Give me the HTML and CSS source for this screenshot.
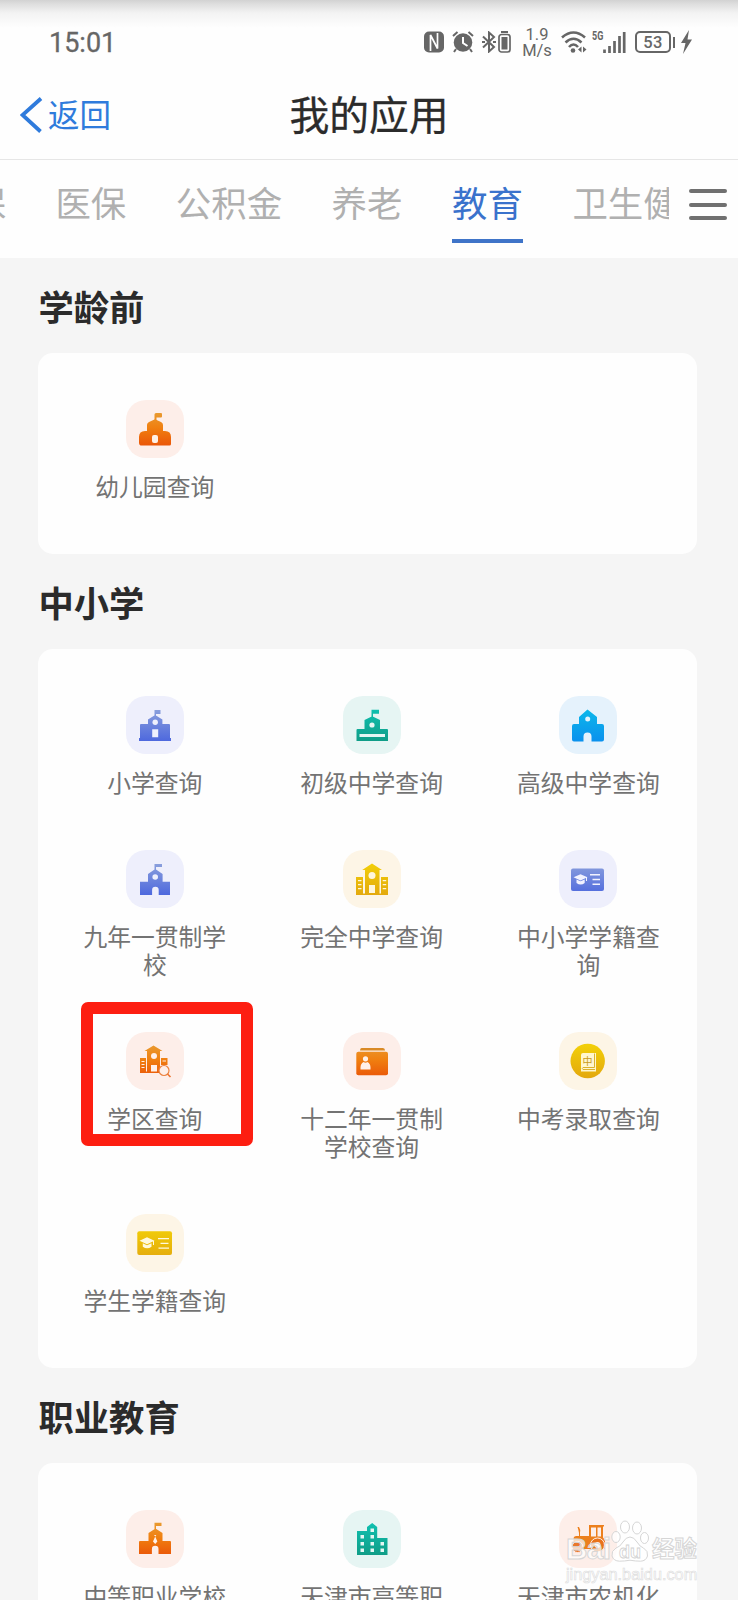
FILE: index.html
```html
<!DOCTYPE html>
<html lang="zh-CN">
<head>
<meta charset="utf-8">
<title>我的应用</title>
<link rel="stylesheet" href="styles.css">
</head>
<body>
<svg class="defs" width="0" height="0" aria-hidden="true">
  <defs>
    <linearGradient id="orange" gradientUnits="userSpaceOnUse" x1="0" y1="13" x2="0" y2="46"><stop offset="0" stop-color="#e99a30"/><stop offset=".45" stop-color="#f07f10"/><stop offset="1" stop-color="#ea5508"/></linearGradient>
    <linearGradient id="indigo" gradientUnits="userSpaceOnUse" x1="0" y1="13" x2="0" y2="46"><stop offset="0" stop-color="#8ba0dc"/><stop offset="1" stop-color="#4c67de"/></linearGradient>
    <linearGradient id="green" gradientUnits="userSpaceOnUse" x1="0" y1="13" x2="0" y2="46"><stop offset="0" stop-color="#10c0b0"/><stop offset="1" stop-color="#109c86"/></linearGradient>
    <linearGradient id="blue" gradientUnits="userSpaceOnUse" x1="0" y1="13" x2="0" y2="46"><stop offset="0" stop-color="#0cb8ea"/><stop offset="1" stop-color="#0a90ee"/></linearGradient>
    <linearGradient id="gold" gradientUnits="userSpaceOnUse" x1="0" y1="13" x2="0" y2="46"><stop offset="0" stop-color="#f2cf08"/><stop offset="1" stop-color="#e3a80e"/></linearGradient>
  </defs>
</svg>
<div class="screen">
  <header class="top">
    <div class="status">
      <span class="clock">15:01</span>
      <div class="indicators">
        <svg class="nfc" width="20" height="22" viewBox="0 0 20 22"><rect y=".5" width="20" height="21" rx="5" fill="#666"/><path d="M6.500 20V4l7 13.500V2" fill="none" stroke="#fff" stroke-width="1.700"/></svg>
        <svg class="alarm" width="22" height="22" viewBox="0 0 22 22"><circle cx="11" cy="11.500" r="9.300" fill="#666"/><path d="M1 5 5.500 1M21 5 16.500 1M4 18l-2 3M18 18l2 3" stroke="#666" stroke-width="2"/><path d="M11 6v6l4.500 3" fill="none" stroke="#fff" stroke-width="2"/></svg>
        <svg class="bluetooth" width="14" height="22" viewBox="0 0 14 22"><path d="M1 5.500 12 16l-5 4.500v-19L12 6 1 16.500" fill="none" stroke="#666" stroke-width="2"/><path d="M0 11h3M11 11h3" stroke="#666" stroke-width="2"/></svg>
        <svg class="cell" width="13" height="22" viewBox="0 0 13 22"><path d="M3 1h7" stroke="#666" stroke-width="2"/><rect x="1" y="3.500" width="11" height="17.500" rx="2.500" fill="none" stroke="#666" stroke-width="1.700"/><rect x="3.500" y="6" width="6" height="12.500" fill="#666"/></svg>
        <span class="speed"><span>1.9</span><span>M/s</span></span>
        <svg class="wifi" width="26" height="22" viewBox="0 0 26 22"><g fill="none" stroke="#666" stroke-width="2.600"><path d="M1 6.500Q12.500-3.500 24 6.500"/><path d="M4.500 11.500Q12.500 4 20.500 11.500"/><path d="M8 16Q12.500 11 17 16"/></g><circle cx="12" cy="19.500" r="2.300" fill="#666"/><path d="M20.500 15.500v6l-3.500-3zM22 15.500v6l3.500-3z" fill="#666"/></svg>
        <span class="net">5G</span>
        <svg class="signal" width="23" height="22" viewBox="0 0 23 22"><path d="M1.500 18.500V22M6.500 15v7M11.500 10v12M16.500 5v17M21.200 1v21" stroke="#666" stroke-width="2.700"/></svg>
        <span class="battery">53</span>
        <i class="nub"></i>
        <svg class="bolt" width="11" height="24" viewBox="0 0 11 24"><path d="M8 0 0 13h4.500L2 24 11 9.500H6.500z" fill="#666"/></svg>
      </div>
    </div>
    <div class="nav">
      <a class="back"><svg width="23" height="36" viewBox="0 0 23 36"><path d="M21 1.500 2.500 18 20.500 34.500" fill="none" stroke="#2f7bdc" stroke-width="3.800"/></svg><span>返回</span></a>
      <h1>我的应用</h1>
    </div>
  </header>
  <nav class="tabbar">
    <div class="tabs">
      <span>社保</span><span>医保</span><span>公积金</span><span>养老</span><span class="active">教育</span><span>卫生健康</span>
    </div>
    <div class="burger"><i></i><i></i><i></i></div>
  </nav>
  <main>
    <h2>学龄前</h2>
    <section class="card">
      <div class="app"><svg class="icon peach" viewBox="0 0 58 58"><g fill="url(#orange)"><path d="M28.500 21V14.500q0-1.500 1.500-1.500h5q1 0 1 1v2.500q0 1-1 1h-4.500V21z"/><path d="M21 31v-6q0-2 2-3l6-2.700 6 2.700q2 1 2 3v6h2q6 0 6 6v7q0 1.500-1.500 1.500h-29Q13 44.500 13 43v-6q0-6 6-6z"/></g><rect x="26" y="35" width="6" height="8" rx="2" fill="#fff0e5"/></svg><p>幼儿园查询</p></div>
    </section>
    <h2>中小学</h2>
    <section class="card">
      <div class="app"><svg class="icon lilac" viewBox="0 0 58 58"><g fill="url(#indigo)"><path d="M28.500 21v-7h6v4h-4.500v3zM22 28v-4.500l7.200-4.500 7.200 4.500V28h6.600q1 0 1 1v13h1v3H13v-3h1V29q0-1 1-1z"/></g><g fill="#eef0fd"><circle cx="29.200" cy="26.300" r="2.700"/><path d="M26.200 33.300h6v8h-6z"/></g></svg><p>小学查询</p></div>
      <div class="app"><svg class="icon mint" viewBox="0 0 58 58"><path fill="url(#green)" d="M28.500 22v-8.300h7.500v4h-6V22zM21.500 33v-9l7.700-3.700L37 24v9h7q1 0 1 1v11H13.500V34q0-1 1-1z"/><g fill="#e5f6f3"><circle cx="29" cy="29" r="2.600"/><path d="M16.500 38h25.500v3H16.500z"/></g></svg><p>初级中学查询</p></div>
      <div class="app"><svg class="icon sky" viewBox="0 0 58 58"><path fill="url(#blue)" d="M28.500 13.500 38 21v7h5q2 0 2 2v13.500q0 2-2 2H32.500v-5a4 4 0 0 0-8 0v5H15q-2 0-2-2V30q0-2 2-2h5v-7z"/><circle cx="28.700" cy="23" r="2.500" fill="#e3f3fd"/></svg><p>高级中学查询</p></div>

      <div class="app"><svg class="icon lilac" viewBox="0 0 58 58"><path fill="url(#indigo)" d="M28.500 20v-6h7.500v3h-6v3zM22 31.700V24l7.300-5 7.300 5v7.700H44V45H32.700v-5a3.300 3.300 0 0 0-6.600 0v5H14V31.700z"/><circle cx="29.200" cy="27" r="2.800" fill="#eef0fd"/></svg><p>九年一贯制学校</p></div>
      <div class="app"><svg class="icon cream" viewBox="0 0 58 58"><path fill="url(#gold)" d="m29 13.500 10 6.500h-2.500v23.500H38V27h7v18H13V27h7v16.500h2V20h-2.800z"/><g fill="#fff6dc"><circle cx="29" cy="25.500" r="3.500"/><path d="M26 35h6v8h-6zM15 30h3.500v1.200H15zM15 34h3.500v1.200H15zM15 38h3.500v1.200H15zM39.700 30h3.500v1.200h-3.500zM39.700 34h3.500v1.200h-3.500zM39.700 38h3.500v1.200h-3.500z"/></g></svg><p>完全中学查询</p></div>
      <div class="app"><svg class="icon lilac" viewBox="0 0 58 58"><rect x="12" y="18.500" width="33" height="22.500" rx="2" fill="url(#indigo)"/><g fill="#f1f2ff"><path d="m21.500 24.300 7 3-7 3.200-7-3.200zM17.500 29.500l4 1.800 4.200-1.800v3.500q-4 3-8.200 0z"/><path d="M27 27h1v4h-1zM31 24h10v1.500H31zM33.500 28.800h7.500v1.500h-7.500zM33.500 33.500h7.500V35h-7.500z"/></g></svg><p>中小学学籍查询</p></div>

      <div class="app marked"><svg class="icon peach" viewBox="0 0 58 58"><path fill="url(#orange)" d="m27.500 13.500 9 5.500H34v22H14V26h6v13.500h1V19h-2.500zM35 26h6.500v7H35z"/><g fill="#fff0e8"><circle cx="28" cy="24" r="3"/><path d="M25 33h6v6.500h-6zM15.500 29h3v1h-3zM15.500 32h3v1h-3zM15.500 35h3v1h-3zM36.500 28.500h3.500v1h-3.500z"/></g><circle cx="38" cy="38.500" r="5" fill="#feefe9" stroke="#ec8340" stroke-width="1.200"/><path d="m41.500 42 3 3" stroke="#ec7430" stroke-width="1.600"/></svg><p>学区查询</p></div>
      <div class="app"><svg class="icon peach" viewBox="0 0 58 58"><path fill="#d98a26" d="M18.500 16H40q2 0 2 2.500H17q0-2.500 1.500-2.500z"/><rect x="13.300" y="19.700" width="31.700" height="23.500" rx="2" fill="url(#orange)"/><g fill="#fff0e8"><circle cx="22.500" cy="26.800" r="2.600"/><path d="M17.500 37.500v-2q0-4 3-5.500 2 1.300 4 0 3 1.500 3 5.500v2z"/></g></svg><p>十二年一贯制学校查询</p></div>
      <div class="app"><svg class="icon cream" viewBox="0 0 58 58"><circle cx="28.700" cy="29" r="17.200" fill="url(#gold)"/><path fill="#fff6cf" d="M24 21h13v18.500H22V23q0-2 2-2z"/><path d="M35.500 21.500V35.500H24q-1.500 1 0 2h12" fill="none" stroke="#dbb22c"/><text class="book" x="28.500" y="32.500" text-anchor="middle">中</text></svg><p>中考录取查询</p></div>

      <div class="app"><svg class="icon cream" viewBox="0 0 58 58"><rect x="11.300" y="17.300" width="34.700" height="23.700" rx="2" fill="url(#gold)"/><g fill="#fff9dd"><path d="m21 23.300 7.500 3.500-7.500 3.500-7.500-3.500zM16.800 29.300l4.200 2 4.500-2v3.500q-4.300 3-8.700 0z"/><path d="M27 27h1v4h-1zM32 24h11v1.300H32zM34.500 28.800h8v1.300h-8zM32.500 33.500h10.500v1.300H32.500z"/></g></svg><p>学生学籍查询</p></div>
    </section>
    <h2>职业教育</h2>
    <section class="card">
      <div class="app"><svg class="icon peach" viewBox="0 0 58 58"><path fill="url(#orange)" d="M28.500 19v-6.300H35.500V16H30v3zM22.500 31v-8l7-4.500 7 4.500v8h7.500q1 0 1 1v12H32.500v-5a3.300 3.300 0 0 0-6.600 0v5H13V32q0-1 1-1z"/><path d="m28 25 1.200 1.500L27 31.500l2.200 2.500 2.200-2.500-2.200-5 1.200-1.500z" fill="#fff0e8"/></svg><p>中等职业学校查询</p></div>
      <div class="app"><svg class="icon mint" viewBox="0 0 58 58"><path fill="url(#green)" d="M14 45V21h10v-4l5.200-4 5 4v11H44.500v17z"/><path fill="#e5f6f3" d="M27.500 18.500h3.500V22h-3.500zM17.500 25H21v3.500h-3.500zM27.500 25h3.500v3.500h-3.500zM17.500 32H21v3.500h-3.500zM27.500 32h3.500v3.500h-3.500zM37.500 32H41v3.500h-3.500zM17.500 38.500H21V42h-3.500zM27.500 38.500h3.500V42h-3.500zM37.500 38.500H41V42h-3.500z"/></svg><p>天津市高等职业院校</p></div>
      <div class="app"><svg class="icon peach" viewBox="0 0 58 58"><path fill="#ec7f1c" fill-rule="evenodd" d="M18.500 17h1.500q2 3 1 6v3H30V15h15v1.500h-1v11l2 2.500v9H14.500v-10q0-3 3-3H20v-3q-.5-3-1.500-6zM32 17.500v9h5v-9zM38.500 17.500v9H42v-9z"/><circle cx="18.500" cy="37" r="5.500" fill="#e9772a" stroke="#feefe9"/><circle cx="38.500" cy="35" r="7" fill="#e9731c" stroke="#feefe9"/><circle cx="38.500" cy="35" r="3" fill="#feefe9"/></svg><p>天津市农机化学校</p></div>
    </section>
  </main>
  <div class="watermark">
    <div class="brand"><span class="bai">Bai</span><svg width="38" height="42" viewBox="0 0 38 42"><g class="paw"><ellipse cx="5" cy="17" rx="4.200" ry="5.500"/><ellipse cx="14" cy="7" rx="4.500" ry="6"/><ellipse cx="26" cy="8" rx="4.500" ry="6"/><ellipse cx="33.500" cy="18" rx="4" ry="5.500"/><path d="M19 17q4 0 7 5t6.500 6q5 3 4 8-1.500 5-7 5.200-5 0-10.500-1-5.500 1-10.500 1-6-.2-7.500-5.200-1-5 4-8 4-1 7-6t7-5z"/></g><text class="du" x="19" y="37.500" text-anchor="middle">du</text></svg><span class="zh">经验</span></div>
    <div class="site">jingyan.baidu.com</div>
  </div>
</div>
</body>
</html>
```

FILE: styles.css
```css
*, *::after { box-sizing: border-box; }
body {
  margin: 0;
  background: #f5f5f5;
  font-family: "Noto Sans CJK SC", sans-serif;
}
.defs { position: absolute; }
.screen {
  position: relative;
  width: 738px;
  height: 1600px;
  overflow: hidden;
}

/* Status bar and title */
.top {
  height: 160px;
  background: linear-gradient(#d2d2d2 0, #dedede 4px, #f3f3f3 13px, #fefefe 28px, #fefefe);
  border-bottom: 1px solid #e6e6e6;
}
.status {
  display: flex;
  justify-content: space-between;
  height: 72px;
  padding: 31px 46px 0 49px;
  font-family: Roboto, sans-serif;
  color: #666;
}
.clock { font-size: 27px; line-height: 24px; -webkit-text-stroke: .3px #666; }
.indicators { display: flex; align-items: flex-start; }
.indicators svg { display: block; }
.alarm { margin-left: 8px; }
.bluetooth { margin-left: 8px; }
.cell { margin-left: 2px; }
.speed {
  display: flex;
  flex-direction: column;
  align-items: center;
  width: 28px;
  margin: -4px -1px 0 12px;
  font-size: 16.500px;
  line-height: 15.500px;
}
.wifi { margin-left: 11px; }
.net {
  width: 11px;
  margin-left: 5px;
  font: 700 12px/11px Roboto, sans-serif;
  transform: scaleX(.75);
  transform-origin: 0 0;
}
.battery {
  width: 36px;
  height: 22px;
  margin-left: 9px;
  border: 2px solid #666;
  border-radius: 5px;
  font-size: 16.500px;
  font-weight: 500;
  letter-spacing: .3px;
  line-height: 19px;
  text-align: center;
}
.nub { width: 2px; height: 11px; margin: 6px 6px 0 2px; background: #666; }
.bolt { margin-top: -1px; }
.nav {
  display: grid;
  grid-template-columns: 130px 1fr 130px;
  align-items: center;
  height: 84px;
}
.back {
  display: flex;
  align-items: center;
  gap: 5px;
  padding-left: 20px;
  color: #2f7bdc;
  font-size: 31.500px;
  line-height: 40px;
}
.back svg { margin-top: 1px; }
.back span { padding-bottom: 2px; }
h1 {
  margin: 0;
  padding-bottom: 2px;
  color: #2b2b2b;
  font-size: 39.800px;
  font-weight: 400;
  line-height: 50px;
  text-align: center;
  -webkit-text-stroke: .3px #2b2b2b;
}

/* Category tabs */
.tabbar {
  display: flex;
  justify-content: space-between;
  height: 98px;
  background: #fefefe;
}
.tabs {
  display: flex;
  width: 669px;
  overflow: hidden;
  gap: 49.500px;
}
.tabs span {
  flex: none;
  height: 83px;
  padding-top: 16px;
  color: #b0b0b0;
  font-size: 35.450px;
  line-height: 52px;
}
.tabs span:first-child { margin-left: -65px; }
.tabs .active { color: #3a72cc; border-bottom: 4px solid #3f74c8; }
.burger {
  display: flex;
  flex-direction: column;
  gap: 9.500px;
  width: 38px;
  margin: 29px 11px 0 0;
}
.burger i { height: 4px; border-radius: 2px; background: #707070; }

/* Sections */
h2 {
  height: 95px;
  margin: 0;
  padding-left: 38.500px;
  color: #2b2b2b;
  font-size: 35.300px;
  font-weight: 700;
  line-height: 96px;
}
.card {
  display: grid;
  grid-template-columns: repeat(3, 216.800px);
  width: 659px;
  margin-left: 38px;
  padding: 47px 0 0 8.400px;
  border-radius: 15px;
  background: #fefefe;
}
.app {
  position: relative;
  display: flex;
  flex-direction: column;
  align-items: center;
  padding-bottom: 54px;
}
.app p {
  width: 150px;
  margin: 14px 0 0;
  color: #737373;
  font-size: 23.800px;
  line-height: 28px;
  text-align: center;
}
.icon { width: 58px; height: 58px; border-radius: 20px; }
.peach { background: #fdeee9; }
.lilac { background: #eeeffc; }
.mint { background: #e6f5f3; }
.sky { background: #e5f2fc; }
.cream { background: #fdf5e6; }
.book { font: 10px "Noto Sans CJK SC", sans-serif; fill: #c89a18; }
.marked::after {
  content: "";
  position: absolute;
  left: 34.500px;
  top: -30px;
  width: 172px;
  height: 144px;
  border: 12px solid #fd1e11;
  border-radius: 7px;
}

/* Corner watermark */
.watermark {
  position: absolute;
  left: 566px;
  top: 1520px;
  width: 134px;
  font-family: "Liberation Sans", sans-serif;
}
.brand {
  display: flex;
  align-items: flex-end;
  height: 42px;
  color: rgba(255, 255, 255, .72);
  font-size: 29.500px;
  font-weight: 700;
  line-height: 26px;
  -webkit-text-stroke: 1px #d6d6d6;
}
.bai { width: 45px; height: 26px; letter-spacing: -.5px; }
.brand .zh { height: 26px; margin-left: 3px; font: 700 22.500px/22px "Noto Sans CJK SC", sans-serif; }
.brand svg { flex: none; }
.paw { fill: rgba(255, 255, 255, .75); stroke: #d6d6d6; }
.du { font: 700 18px "Liberation Sans", sans-serif; fill: #fff; stroke: #d2d2d2; stroke-width: .8; -webkit-text-stroke: 0; }
.site {
  margin-top: 2px;
  color: rgba(255, 255, 255, .8);
  font-size: 16.300px;
  line-height: 20px;
  -webkit-text-stroke: .6px #dcdcdc;
}
```
